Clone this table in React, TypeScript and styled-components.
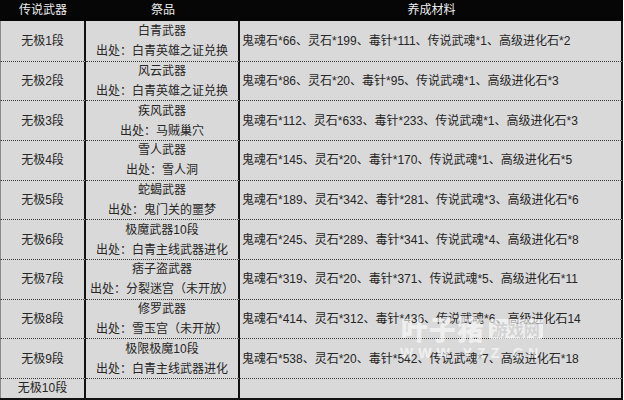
import React from "react";
import styled, { createGlobalStyle } from "styled-components";

const Global = createGlobalStyle`
  html, body { margin: 0; padding: 0; background: #ffffff; }
  body { font-family: "Liberation Sans", "Noto Sans CJK SC", sans-serif; }
`;

const Wrap = styled.div`
  position: relative;
  width: 624px;
  height: 400px;
  overflow: hidden;
`;

const Grid = styled.div`
  display: grid;
  width: 623px;
  grid-template-columns: 86px 154px 383px;
  grid-template-rows: 21px repeat(9, 39.667px) 20px;
  background: #d9d9d9;
  border-bottom: 2px solid #111;
  box-sizing: border-box;
  height: 400px;
  font-family: "Liberation Sans", "Noto Sans CJK SC", sans-serif;
  font-size: 12px;
  color: #262626;
`;

const Head = styled.div`
  background: #060606;
  color: #ececec;
  display: flex;
  align-items: center;
  justify-content: center;
  line-height: 1;
  padding-bottom: 1px;
`;

const Cell = styled.div<{ $first?: boolean; $left?: boolean }>`
  display: flex;
  flex-direction: column;
  align-items: ${(p) => (p.$left ? "flex-start" : "center")};
  justify-content: center;
  padding-left: ${(p) => (p.$left ? "2px" : "0")};
  border-right: 2px solid #111;
  border-top: ${(p) => (p.$first ? "none" : "1px dotted #3a3a3a")};
  box-sizing: border-box;
  white-space: nowrap;
  line-height: 20px;
`;

const NameCell = styled(Cell)`
  border-left: 1px solid #8a8a8a;
`;

const Watermark = styled.div`
  position: absolute;
  left: 400px;
  top: 314px;
  display: flex;
  flex-direction: column;
  align-items: center;
  opacity: 0.6;
  pointer-events: none;
`;

const WmTop = styled.div`
  display: flex;
  align-items: center;
  gap: 4px;
`;

const WmBig = styled.span`
  font-family: "Noto Sans CJK SC", sans-serif;
  font-weight: 900;
  font-size: 27px;
  line-height: 30px;
  color: #ffffff;
  letter-spacing: 1px;
`;

const WmBox = styled.span`
  font-family: "Noto Sans CJK SC", sans-serif;
  font-weight: 700;
  font-size: 16px;
  line-height: 20px;
  color: #cfcfcf;
  background: #ffffff;
  border-radius: 3px;
  padding: 0 3px;
`;

const WmUrl = styled.span`
  font-family: "Liberation Sans", sans-serif;
  font-weight: 700;
  font-size: 14px;
  letter-spacing: 5px;
  color: #ffffff;
  line-height: 16px;
  margin-top: 1px;
`;

const rows: [string, string, string, string][] = [
  ["无极1段", "白青武器", "出处：白青英雄之证兑换", "鬼魂石*66、灵石*199、毒针*111、传说武魂*1、高级进化石*2"],
  ["无极2段", "风云武器", "出处：白青英雄之证兑换", "鬼魂石*86、灵石*20、毒针*95、传说武魂*1、高级进化石*3"],
  ["无极3段", "疾风武器", "出处：马贼巢穴", "鬼魂石*112、灵石*633、毒针*233、传说武魂*1、高级进化石*3"],
  ["无极4段", "雪人武器", "出处：雪人洞", "鬼魂石*145、灵石*20、毒针*170、传说武魂*1、高级进化石*5"],
  ["无极5段", "蛇蝎武器", "出处：鬼门关的噩梦", "鬼魂石*189、灵石*342、毒针*281、传说武魂*3、高级进化石*6"],
  ["无极6段", "极魔武器10段", "出处：白青主线武器进化", "鬼魂石*245、灵石*289、毒针*341、传说武魂*4、高级进化石*8"],
  ["无极7段", "痞子盗武器", "出处：分裂迷宫（未开放）", "鬼魂石*319、灵石*20、毒针*371、传说武魂*5、高级进化石*11"],
  ["无极8段", "修罗武器", "出处：雪玉宫（未开放）", "鬼魂石*414、灵石*312、毒针*436、传说武魂*6、高级进化石14"],
  ["无极9段", "极限极魔10段", "出处：白青主线武器进化", "鬼魂石*538、灵石*20、毒针*542、传说武魂*7、高级进化石*18"],
];

export default function App() {
  return (
    <Wrap>
      <Global />
      <Grid>
        <Head>传说武器</Head>
        <Head>祭品</Head>
        <Head>养成材料</Head>
        {rows.map((r, i) => (
          <React.Fragment key={r[0]}>
            <NameCell $first={i === 0}>{r[0]}</NameCell>
            <Cell $first={i === 0}>
              <span>{r[1]}</span>
              <span>{r[2]}</span>
            </Cell>
            <Cell $first={i === 0} $left>
              {r[3]}
            </Cell>
          </React.Fragment>
        ))}
        <NameCell>无极10段</NameCell>
        <Cell />
        <Cell />
      </Grid>
      <Watermark>
        <WmTop>
          <WmBig>叶子猪</WmBig>
          <WmBox>游戏网</WmBox>
        </WmTop>
        <WmUrl>WWW.YZZ.CN</WmUrl>
      </Watermark>
    </Wrap>
  );
}
